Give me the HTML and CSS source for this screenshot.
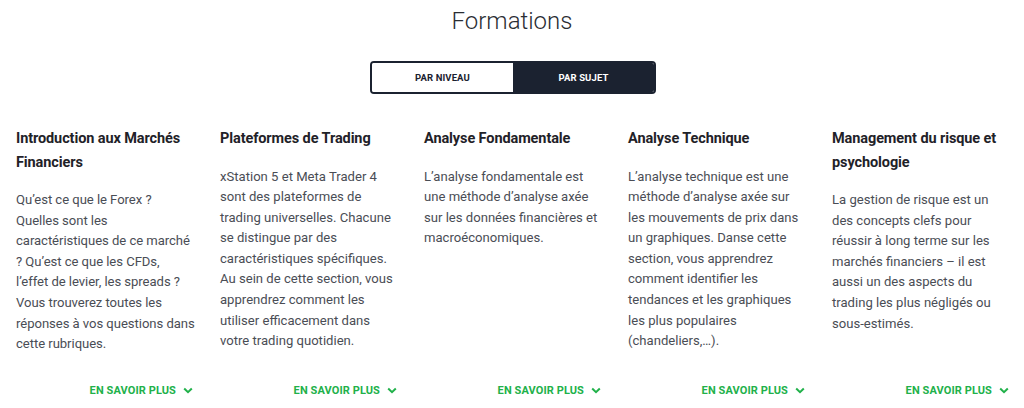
FILE: index.html
```html
<!DOCTYPE html>
<html lang="fr">
<head>
<meta charset="utf-8">
<link rel="stylesheet" href="styles.css">
</head>
<body>
<div class="page">
  <h1 class="title">Formations</h1>
  <div class="toggle">
    <button class="tab">PAR NIVEAU</button>
    <button class="tab active">PAR SUJET</button>
  </div>
  <div class="cols">
    <div class="col">
      <h2 class="head">Introduction aux Marchés Financiers</h2>
      <p class="text text-lines">Qu’est ce que le Forex ?<br>Quelles sont les<br>caractéristiques de ce marché<br>? Qu’est ce que les CFDs,<br>l’effet de levier, les spreads ?<br>Vous trouverez toutes les<br>réponses à vos questions dans<br>cette rubriques.</p>
      <a class="more">EN SAVOIR PLUS <svg width="10" height="7" viewBox="0 0 10 7"><path d="M1.2 1.5 L5 5.2 L8.8 1.5" fill="none" stroke="currentColor" stroke-width="2"/></svg></a>
    </div>
    <div class="col">
      <h2 class="head">Plateformes de Trading</h2>
      <p class="text">xStation 5 et Meta Trader 4 sont des plateformes de trading universelles. Chacune se distingue par des caractéristiques spécifiques. Au sein de cette section, vous apprendrez comment les utiliser efficacement dans votre trading quotidien.</p>
      <a class="more">EN SAVOIR PLUS <svg width="10" height="7" viewBox="0 0 10 7"><path d="M1.2 1.5 L5 5.2 L8.8 1.5" fill="none" stroke="currentColor" stroke-width="2"/></svg></a>
    </div>
    <div class="col">
      <h2 class="head">Analyse Fondamentale</h2>
      <p class="text">L’analyse fondamentale est une méthode d’analyse axée sur les données financières et macroéconomiques.</p>
      <a class="more">EN SAVOIR PLUS <svg width="10" height="7" viewBox="0 0 10 7"><path d="M1.2 1.5 L5 5.2 L8.8 1.5" fill="none" stroke="currentColor" stroke-width="2"/></svg></a>
    </div>
    <div class="col">
      <h2 class="head">Analyse Technique</h2>
      <p class="text">L’analyse technique est une méthode d’analyse axée sur les mouvements de prix dans un graphiques. Danse cette section, vous apprendrez comment identifier les tendances et les graphiques les plus populaires (chandeliers,…).</p>
      <a class="more">EN SAVOIR PLUS <svg width="10" height="7" viewBox="0 0 10 7"><path d="M1.2 1.5 L5 5.2 L8.8 1.5" fill="none" stroke="currentColor" stroke-width="2"/></svg></a>
    </div>
    <div class="col">
      <h2 class="head">Management du risque et psychologie</h2>
      <p class="text">La gestion de risque est un des concepts clefs pour réussir à long terme sur les marchés financiers – il est aussi un des aspects du trading les plus négligés ou sous-estimés.</p>
      <a class="more">EN SAVOIR PLUS <svg width="10" height="7" viewBox="0 0 10 7"><path d="M1.2 1.5 L5 5.2 L8.8 1.5" fill="none" stroke="currentColor" stroke-width="2"/></svg></a>
    </div>
  </div>
</div>
</body>
</html>
```

FILE: styles.css
```css
* { box-sizing: border-box; }
body {
  margin: 0;
  background: #fff;
  font-family: Roboto, "Liberation Sans", sans-serif;
  color: #2d3038;
}
.page { width: 1024px; }
.title {
  margin: 0;
  padding-top: 6px;
  height: 42px;
  text-align: center;
  font-size: 24px;
  font-weight: 300;
  line-height: 30px;
  color: #2a2d33;
}
.toggle {
  display: flex;
  width: 286px;
  height: 33px;
  margin: 19px 0 0 370px;
  border: 2px solid #1b2230;
  border-radius: 4px;
  overflow: hidden;
}
.tab {
  flex: 1;
  border: 0;
  margin: 0;
  padding: 0;
  background: #fff;
  color: #1b2230;
  font-family: Roboto, "Liberation Sans", sans-serif;
  font-weight: 700;
  font-size: 9.5px;
  letter-spacing: 0.1px;
}
.tab.active { background: #1b2230; color: #fff; }
.cols {
  display: grid;
  grid-template-columns: repeat(5, 204px);
  margin-top: 33px;
}
.col {
  display: flex;
  flex-direction: column;
  padding: 0 8px 0 16px;
  height: 270px;
}
.head {
  margin: 0;
  font-size: 14.5px;
  line-height: 23.5px;
  font-weight: 700;
  color: #1f2228;
  letter-spacing: -0.1px;
}
.text {
  margin: 16px 0 0;
  font-size: 13.1px;
  line-height: 20.6px;
  color: #4a4d55;
}
.text-lines { white-space: nowrap; letter-spacing: -0.05px; }
.more {
  margin-top: auto;
  align-self: flex-end;
  display: flex;
  align-items: center;
  gap: 7px;
  color: #21b14a;
  font-weight: 700;
  font-size: 11px;
  letter-spacing: 0.1px;
  padding-right: 3px;
}
```
